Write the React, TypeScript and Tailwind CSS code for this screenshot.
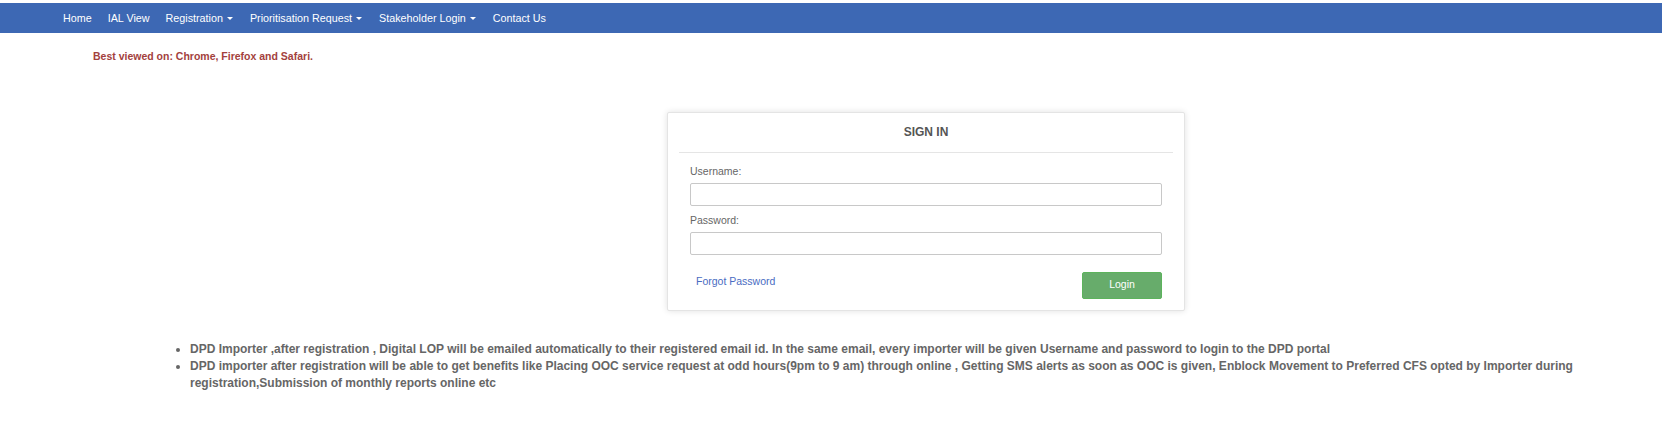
const navItems = [
  { label: "Home", caret: false },
  { label: "IAL View", caret: false },
  { label: "Registration", caret: true },
  { label: "Prioritisation Request", caret: true },
  { label: "Stakeholder Login", caret: true },
  { label: "Contact Us", caret: false },
];

const notes = [
  "DPD Importer ,after registration , Digital LOP will be emailed automatically to their registered email id. In the same email, every importer will be given Username and password to login to the DPD portal",
  "DPD importer after registration will be able to get benefits like Placing OOC service request at odd hours(9pm to 9 am) through online , Getting SMS alerts as soon as OOC is given, Enblock Movement to Preferred CFS opted by Importer during registration,Submission of monthly reports online etc",
];

const Caret = () => (
  <span className="ml-[4px] mr-[1px] inline-block h-0 w-0 border-x-[3px] border-t-[3px] border-x-transparent border-t-white align-middle" />
);

const App = () => {
  return (
    <div className="min-h-[440px] bg-white pt-[3px] font-['Liberation_Sans',Arial,sans-serif]">
      <nav className="flex h-[30px] items-center bg-[#3d68b4] pl-[55px]">
        {navItems.map((item) => (
          <a key={item.label} className="flex items-center px-[8px] text-[10.75px] text-white">
            {item.label}
            {item.caret && <Caret />}
          </a>
        ))}
      </nav>

      <p className="ml-[93px] mt-[16px] text-[10.5px] font-bold text-[#a3413d]">
        Best viewed on: Chrome, Firefox and Safari.
      </p>

      <div className="ml-[667px] mt-[47px] w-[518px] rounded-[2px] border border-[#e4e4e4] bg-white px-[11px] shadow-[0_0_6px_rgba(0,0,0,0.12)]">
        <h3 className="flex h-[40px] items-center justify-center border-b border-[#e5e5e5] text-[12px] font-bold text-[#555]">
          SIGN IN
        </h3>
        <div className="px-[11px] pt-[11px] pb-[11px]">
          <label className="block text-[10.5px] leading-[14px] text-[#666]">Username:</label>
          <input className="mt-[5px] block h-[23px] w-full rounded-[2px] border border-[#c8c8c8] bg-white" />
          <label className="mt-[7px] block text-[10.5px] leading-[14px] text-[#666]">Password:</label>
          <input type="password" className="mt-[5px] block h-[23px] w-full rounded-[2px] border border-[#c8c8c8] bg-white" />
          <div className="mt-[17px] flex items-start justify-between">
            <a className="ml-[6px] text-[10.5px] leading-[18px] text-[#4a6cc2]">Forgot Password</a>
            <button className="h-[27px] w-[80px] rounded-[2px] border border-[#5cb35c] bg-[#67ac6b] text-[10.5px] text-white">
              Login
            </button>
          </div>
        </div>
      </div>

      <ul className="ml-[190px] mt-[30px] w-[1420px] list-disc text-[12px] leading-[17px] font-bold text-[#666] marker:text-[#666]">
        {notes.map((n) => (
          <li key={n.slice(0, 20)}>{n}</li>
        ))}
      </ul>
    </div>
  );
};

export default App;
